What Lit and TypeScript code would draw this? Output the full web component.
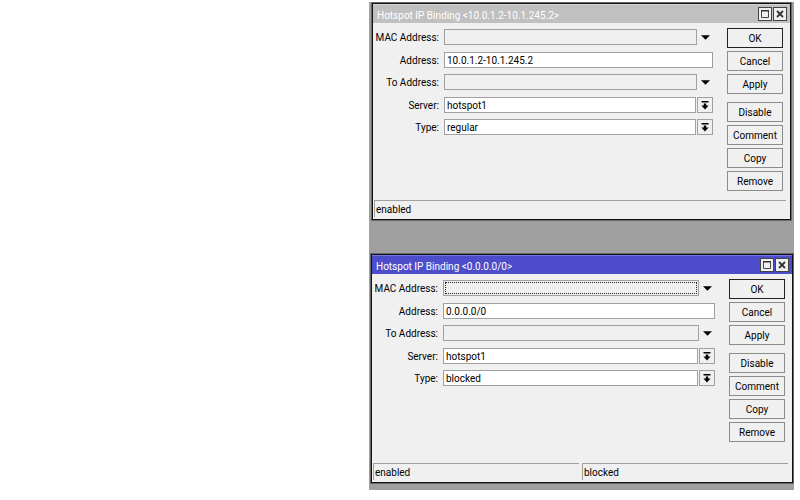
import { LitElement, html, css, svg, nothing } from "lit";
import { customElement, property } from "lit/decorators.js";
import { classMap } from "lit/directives/class-map.js";

const actions = [
  ["OK", "Cancel", "Apply"],
  ["Disable", "Comment", "Copy", "Remove"],
];

const triangle = html`<svg width="9" height="5" viewBox="0 0 9 5">${svg`<path d="M0 0.3H9L4.5 4.8Z" fill="#000" />`}</svg>`;
const dropArrow = html`<svg width="8" height="9" viewBox="0 0 8 9">${svg`<path d="M0.5 0H7.5V1.4H0.5ZM2.8 2.4H5.2V4.4H7.6L4 8.4L0.4 4.4H2.8Z" fill="#000" />`}</svg>`;
const maximize = html`<svg width="10" height="10" viewBox="0 0 10 10">${svg`<path d="M1.5 1.5H8.5V8.5H1.5Z" fill="none" stroke="#444" /><path d="M1 1H9V2.5H1Z" fill="#333" />`}</svg>`;
const cross = html`<svg width="10" height="10" viewBox="0 0 10 10">${svg`<path d="M2 2L8 8M8 2L2 8" stroke="#333" stroke-width="1.8" fill="none" />`}</svg>`;

@customElement("binding-dialog")
export class BindingDialog extends LitElement {
  @property() target = "";
  @property() address = "";
  @property() server = "";
  @property() type = "";
  @property({ type: Boolean }) active = false;
  @property({ attribute: false }) statuses: string[] = [];

  static styles = css`
    :host {
      display: block;
    }
    * {
      box-sizing: border-box;
    }
    .window {
      display: flex;
      flex-direction: column;
      height: 100%;
      border: 1px solid #111;
      outline: 1px solid #686868;
      background: #f0f0f0;
      color: #000;
    }
    .title {
      display: flex;
      align-items: center;
      height: 19px;
      padding: 0 3px 0 4px;
      background: #c0c0c0;
      border-top: 1px solid #d4d4d4;
      color: #fff;
    }
    .title.active {
      background: #4d4dcc;
      border-color: #7777e4;
    }
    h2 {
      flex: 1;
      margin: 0;
      padding-top: 3px;
      font: inherit;
      white-space: nowrap;
    }
    .tools {
      display: flex;
      gap: 1px;
    }
    button,
    input,
    select {
      margin: 0;
      font: inherit;
      color: inherit;
      border-radius: 0;
      appearance: none;
      outline: none;
    }
    button {
      display: flex;
      align-items: center;
      justify-content: center;
      padding: 0;
      background: #f0f0f0;
      border: 1px solid #8c8c8c;
    }
    .tools button {
      width: 14px;
      height: 14px;
      border-color: #444;
    }
    .body {
      flex: 1;
      display: flex;
      gap: 14px;
      padding: 5px 7px 8px 0;
    }
    .fields {
      flex: 1;
      display: grid;
      grid-template-rows: 23px 22px 23px 22px 22px;
      padding-top: 1px;
    }
    .row {
      display: grid;
      grid-template-columns: 66px 1fr auto;
      align-items: center;
      height: 16px;
    }
    label {
      padding-top: 1px;
      text-align: right;
      white-space: nowrap;
    }
    input,
    select {
      width: auto;
      min-width: 0;
      height: 16px;
      margin-left: 5px;
      padding: 1px 1px 0 2px;
      background: #fff;
      border: 1px solid #a0a0a0;
    }
    select {
      margin-right: 1px;
    }
    .wide {
      grid-column: 2 / 4;
    }
    .empty {
      background: #f0f0f0;
    }
    .focused {
      outline: 1px dotted #222;
      outline-offset: -3px;
    }
    .row button {
      width: 16px;
      height: 16px;
      border-color: #a0a0a0;
    }
    .row .plain {
      background: none;
      border: none;
    }
    .actions {
      display: flex;
      flex-direction: column;
      gap: 8px;
      width: 56px;
    }
    .group {
      display: flex;
      flex-direction: column;
      gap: 3px;
    }
    .group button {
      height: 20px;
      padding-top: 1px;
    }
    .group .default {
      border-color: #222;
    }
    .status {
      display: grid;
      grid-auto-flow: column;
      grid-auto-columns: 1fr;
      gap: 3px;
      padding: 0 4px 2px 1px;
    }
    .status div {
      height: 17px;
      padding: 2px 1px;
      border-top: 1px solid #a0a0a0;
      border-left: 1px solid #a0a0a0;
    }
  `;

  private combo(id: string, label: string, focused = false) {
    return html`<div class="row">
      <label for=${id}>${label}:</label>
      <input id=${id} class=${classMap({ empty: true, focused })} />
      <button class="plain" aria-label="Set ${label}">${triangle}</button>
    </div>`;
  }

  private choice(id: string, label: string, value: string) {
    return html`<div class="row">
      <label for=${id}>${label}:</label>
      <select id=${id}><option>${value}</option></select>
      <button aria-label="Choose ${label}">${dropArrow}</button>
    </div>`;
  }

  render() {
    return html`<section class="window">
      <header class=${classMap({ title: true, active: this.active })}>
        <h2>Hotspot IP Binding &lt;${this.target}&gt;</h2>
        <div class="tools">
          <button aria-label="Maximize">${maximize}</button>
          <button aria-label="Close">${cross}</button>
        </div>
      </header>
      <div class="body">
        <div class="fields">
          ${this.combo("mac", "MAC Address", this.active)}
          <div class="row">
            <label for="address">Address:</label>
            <input id="address" class="wide" .value=${this.address} />
          </div>
          ${this.combo("to", "To Address")}
          ${this.choice("server", "Server", this.server)}
          ${this.choice("type", "Type", this.type)}
        </div>
        <div class="actions">
          ${actions.map(
            (group) => html`<div class="group">
              ${group.map((name) => html`<button class=${name === "OK" ? "default" : nothing}>${name}</button>`)}
            </div>`
          )}
        </div>
      </div>
      <footer class="status">${this.statuses.map((s) => html`<div>${s}</div>`)}</footer>
    </section>`;
  }
}

@customElement("app-root")
export class AppRoot extends LitElement {
  static styles = css`
    :host {
      display: grid;
      grid-template-columns: 369fr 425fr;
      padding: 2px 6px 10px 0;
      background: #fff;
      font: 10px/13px Roboto, "Liberation Sans", sans-serif;
    }
    .desktop {
      grid-column: 2;
      display: flex;
      flex-direction: column;
      gap: 34px;
      padding: 1px 1px 7px 2px;
      background: #a0a0a0;
    }
    .first {
      min-height: 217px;
      margin: 0 2px 0 1px;
    }
    .second {
      min-height: 229px;
    }
    binding-dialog {
      display: grid;
    }
  `;

  render() {
    return html`<main class="desktop">
      <binding-dialog
        class="first"
        target="10.0.1.2-10.1.245.2"
        address="10.0.1.2-10.1.245.2"
        server="hotspot1"
        type="regular"
        .statuses=${["enabled"]}
      ></binding-dialog>
      <binding-dialog
        class="second"
        active
        target="0.0.0.0/0"
        address="0.0.0.0/0"
        server="hotspot1"
        type="blocked"
        .statuses=${["enabled", "blocked"]}
      ></binding-dialog>
    </main>`;
  }
}
